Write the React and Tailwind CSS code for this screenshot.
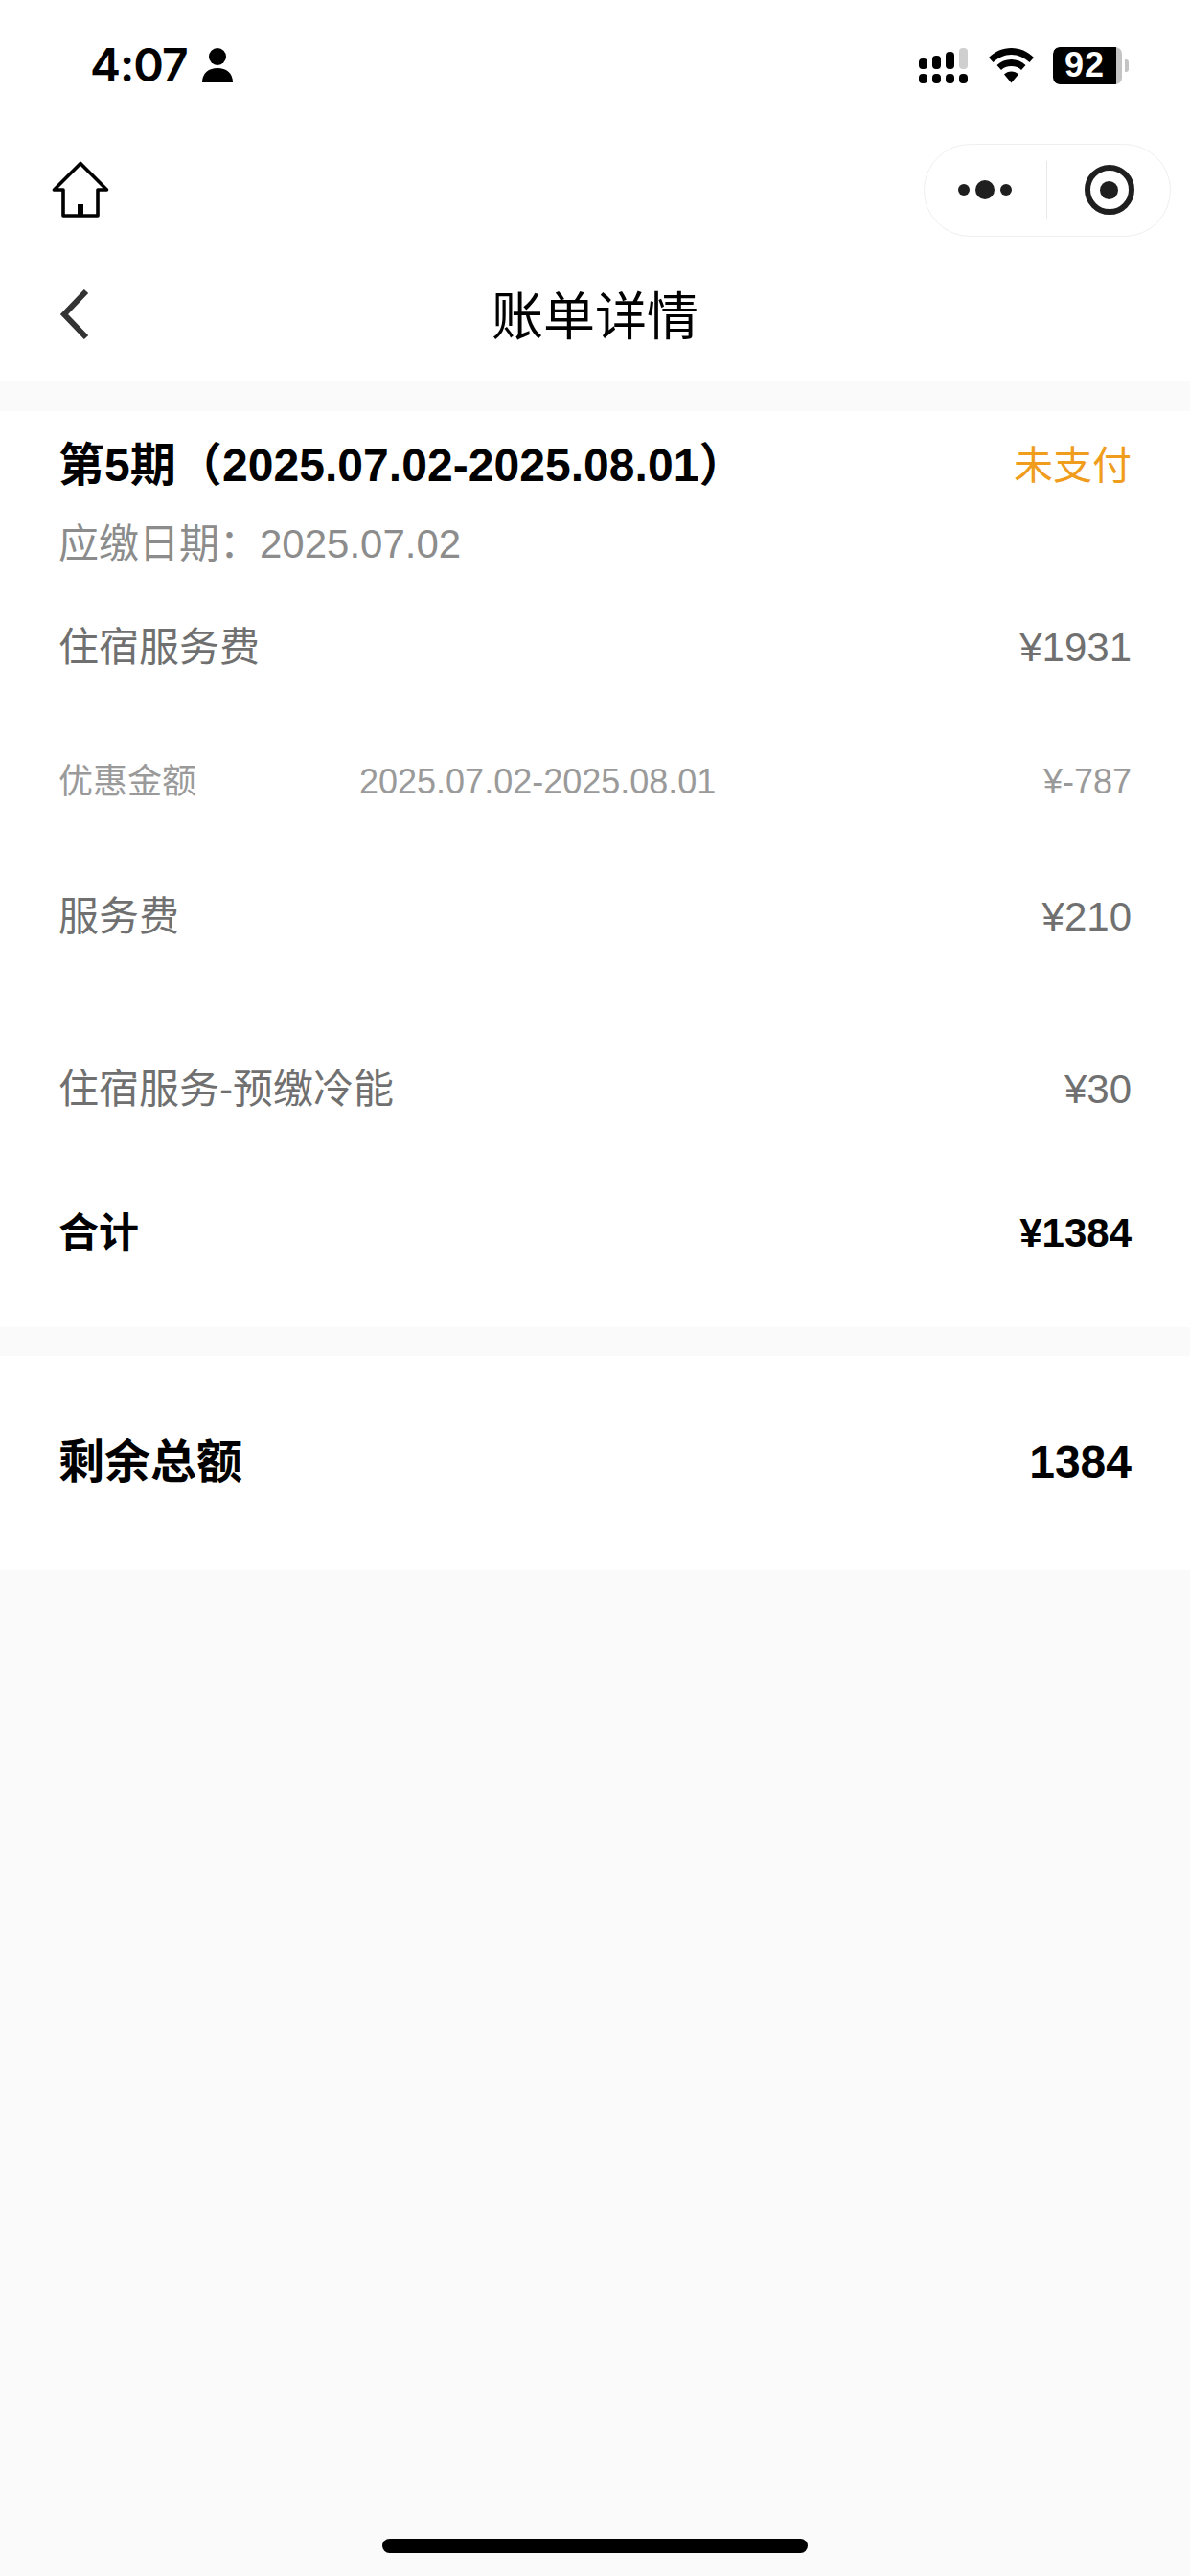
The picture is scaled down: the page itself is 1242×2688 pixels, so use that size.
const sans = 'font-["Liberation_Sans","Noto_Sans_CJK_SC",sans-serif]';

function HomeIcon() {
  return (
    <svg width="60" height="60" viewBox="0 0 60 60" fill="none" stroke="#000" strokeWidth="3.6" strokeLinejoin="round" strokeLinecap="round">
      <path d="M30 2.5 L2.5 30 H12 V57 H48 V30 H57.5 Z" />
      <path d="M30 57 V45" strokeWidth="6" strokeLinecap="butt" />
    </svg>
  );
}

function Signal() {
  const top = [
    'h-[11px] bg-black',
    'h-[14px] bg-black',
    'h-[18px] bg-black',
    'h-[22px] bg-[#cfcfcf]',
  ];
  return (
    <div className="flex flex-col gap-[5px] w-[51px]">
      <div className="flex items-end justify-between h-[22px]">
        {top.map((c, i) => <span key={i} className={`w-[9px] rounded-[4px] ${c}`} />)}
      </div>
      <div className="flex justify-between">
        {[0, 1, 2, 3].map((i) => <span key={i} className="w-[9px] h-[10px] rounded-[4px] bg-black" />)}
      </div>
    </div>
  );
}

function Wifi() {
  return (
    <svg width="47" height="37" viewBox="0 0 47 37" fill="#000">
      <path d="M23.5 0 C14.5 0 6.5 3.5 0 10 L4.5 15 C10 10 16.5 7 23.5 7 C30.5 7 37 10 42.5 15 L47 10 C40.5 3.5 32.5 0 23.5 0 Z" />
      <path d="M23.5 12 C17.5 12 12.5 14 8.5 18 L13 23 C15.5 20.5 19 19 23.5 19 C28 19 31.5 20.5 34 23 L38.5 18 C34.5 14 29.5 12 23.5 12 Z" />
      <path d="M23.5 24.5 C20.5 24.5 18 25.5 16 27.5 L23.5 36.5 L31 27.5 C29 25.5 26.5 24.5 23.5 24.5 Z" />
    </svg>
  );
}

function Battery() {
  return (
    <div className="flex items-center">
      <div className="relative w-[72px] h-[39px] rounded-[7px] bg-[#c4c4c4] overflow-hidden">
        <div className="absolute inset-y-0 left-0 w-[66px] bg-black rounded-l-[7px]" />
        <span className={`absolute inset-y-0 left-0 w-[66px] flex items-center justify-center text-white text-[36px] leading-none font-bold tracking-[1px] ${sans}`}>92</span>
      </div>
      <div className="w-[4px] h-[13px] ml-[3px] rounded-r-[3px] bg-[#c4c4c4]" />
    </div>
  );
}

function Row({ label, value, className }) {
  return (
    <div className={`flex items-center justify-between ${className}`}>
      <span>{label}</span>
      <span>{value}</span>
    </div>
  );
}

export default function App() {
  return (
    <div className={`relative w-[1242px] h-[2688px] bg-[#fafafa] overflow-hidden ${sans}`}>
      <div className="bg-white">
        {/* status bar */}
        <div className="flex items-center justify-between h-[136px] pl-[94px] pr-[64px]">
          <div className="flex items-center gap-[15px]">
            <span className="text-[48px] leading-none font-semibold text-black font-['Inter',sans-serif] tracking-[-1px]">4:07</span>
            <svg width="32" height="36" viewBox="0 0 32 36" fill="#000">
              <circle cx="16" cy="9" r="9" />
              <path d="M0 36 C0 26 7 21 16 21 C25 21 32 26 32 36 Z" />
            </svg>
          </div>
          <div className="flex items-center">
            <Signal />
            <div className="ml-[22px] mr-[20px]"><Wifi /></div>
            <Battery />
          </div>
        </div>

        {/* capsule row */}
        <div className="flex items-center justify-between h-[124px] pl-[54px] pr-[20px]">
          <HomeIcon />
          <div className="flex items-center w-[258px] h-[97px] rounded-full border border-[#efefef] bg-white">
            <div className="flex flex-1 items-center justify-center gap-[6px]">
              <span className="w-[12px] h-[12px] rounded-full bg-[#1f1f1f]" />
              <span className="w-[20px] h-[20px] rounded-full bg-[#1f1f1f]" />
              <span className="w-[12px] h-[12px] rounded-full bg-[#1f1f1f]" />
            </div>
            <div className="w-px h-[60px] bg-[#e8e8e8]" />
            <div className="flex flex-1 items-center justify-center pl-[2px]">
              <div className="flex items-center justify-center w-[52px] h-[52px] rounded-full border-[6px] border-[#1f1f1f]">
                <span className="w-[19px] h-[19px] rounded-full bg-[#1f1f1f]" />
              </div>
            </div>
          </div>
        </div>

        {/* title */}
        <div className="relative flex items-center justify-center h-[138px] pt-[4px]">
          <svg className="absolute left-[62px] top-[42px]" width="32" height="52" viewBox="0 0 32 52" fill="none" stroke="#333" strokeWidth="6">
            <path d="M28 2 L5 26 L28 50" />
          </svg>
          <h1 className="text-[54px] leading-none font-normal text-black">账单详情</h1>
        </div>
      </div>

      {/* bill */}
      <div className="mt-[31px] bg-white px-[61px] h-[956px]">
        <div className="flex items-center justify-between pt-[24px] h-[90px]">
          <span className="text-[48px] leading-none font-bold text-black tracking-[0.05px]">第5期（2025.07.02-2025.08.01）</span>
          <span className="text-[41px] leading-none text-[#f09c1c]">未支付</span>
        </div>
        <div className="mt-[28px] text-[42px] leading-none text-[#8c8c8c]">应缴日期：2025.07.02</div>
        <Row label="住宿服务费" value="¥1931" className="mt-[66px] text-[42px] leading-none text-[#707070]" />
        <div className="flex items-center mt-[101px] text-[36px] leading-none text-[#9a9a9a]">
          <span className="w-[314px]">优惠金额</span>
          <span className="flex-1">2025.07.02-2025.08.01</span>
          <span>¥-787</span>
        </div>
        <Row label="服务费" value="¥210" className="mt-[102px] text-[42px] leading-none text-[#707070]" />
        <Row label="住宿服务-预缴冷能" value="¥30" className="mt-[138px] text-[42px] leading-none text-[#707070]" />
        <Row label="合计" value="¥1384" className="mt-[108px] text-[42px] leading-none font-bold text-black" />
      </div>

      {/* remaining */}
      <div className="mt-[30px] bg-white px-[61px] pb-[2px] h-[223px] flex items-center">
        <Row label="剩余总额" value="1384" className="w-full text-[48px] leading-none font-bold text-black" />
      </div>

      <div className="absolute left-1/2 bottom-[24px] -translate-x-1/2 w-[444px] h-[15px] rounded-full bg-black" />
    </div>
  );
}
